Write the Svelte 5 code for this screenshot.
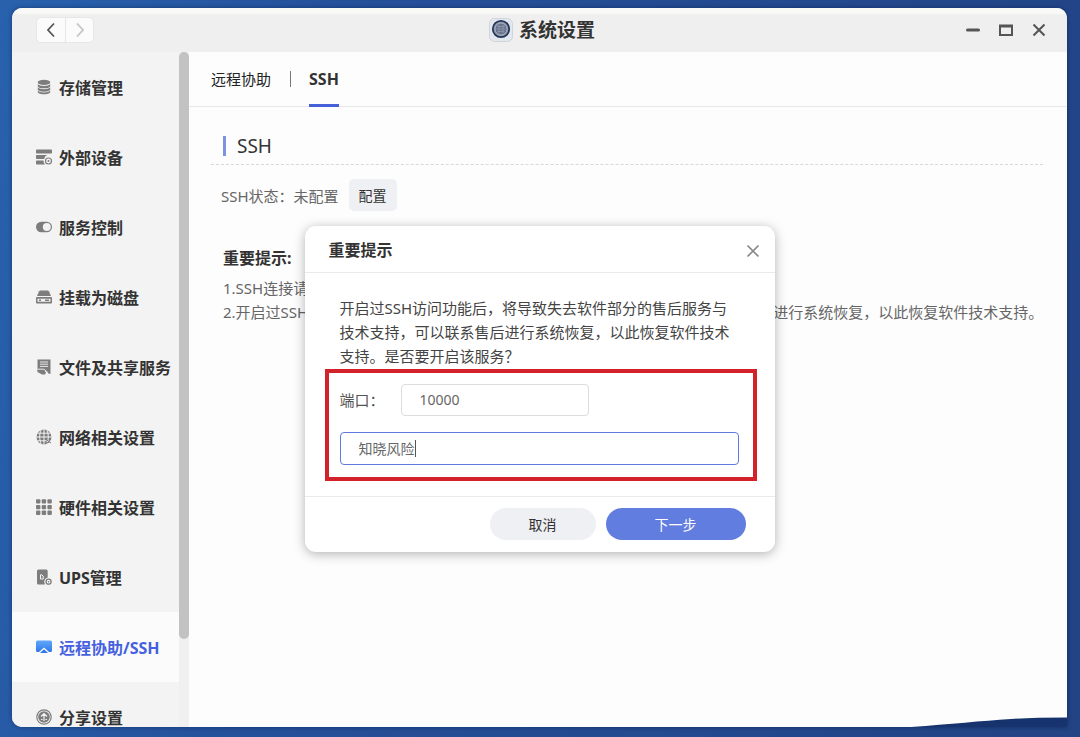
<script lang="ts">
  type MenuItem = { id: string; label: string };

  const menu: MenuItem[] = [
    { id: 'storage', label: '存储管理' },
    { id: 'external', label: '外部设备' },
    { id: 'service', label: '服务控制' },
    { id: 'mount', label: '挂载为磁盘' },
    { id: 'share-files', label: '文件及共享服务' },
    { id: 'network', label: '网络相关设置' },
    { id: 'hardware', label: '硬件相关设置' },
    { id: 'ups', label: 'UPS管理' },
    { id: 'remote', label: '远程协助/SSH' },
    { id: 'sharing', label: '分享设置' },
  ];

  let active = $state('remote');
  let dialogOpen = $state(true);
  let port = $state('10000');
  let confirmText = $state('知晓风险');
</script>

{#snippet menuIcon(id: string)}
  <svg class="menu-icon" viewBox="0 0 16 16" fill="currentColor" aria-hidden="true">
    {#if id === 'storage'}
      <ellipse cx="8" cy="3.4" rx="6.2" ry="2.6" />
      <path d="M1.800 5c1 2.500 11.400 2.500 12.400 0v2.400c-1 2.600-11.400 2.600-12.400 0zM1.800 8.300c1 2.500 11.400 2.500 12.400 0v2.400c-1 2.600-11.400 2.600-12.400 0zM1.800 11.600c1 2.500 11.400 2.500 12.400 0v1.600c-1 2.800-11.400 2.800-12.400 0z" />
    {:else if id === 'external'}
      <rect x="0" y="0.500" width="16" height="4" rx="0.800" />
      <path d="M.8 6h10.400a5 5 0 0 0-3 4H.8A.8.8 0 0 1 0 9.200V6.800A.8.8 0 0 1 .8 6zM.8 11.500H7.500a5 5 0 0 0 1.700 4H.8a.8.8 0 0 1-.8-.8v-2.400a.8.8 0 0 1 .8-.8z" />
      <circle cx="12.500" cy="12" r="3" fill="none" stroke="currentColor" stroke-width="1.200" />
      <circle cx="12.500" cy="12" r="1" />
    {:else if id === 'service'}
      <rect x="0" y="2.800" width="16" height="10.400" rx="5.200" />
      <circle cx="10.800" cy="8" r="4" fill="#f3f3f3" />
    {:else if id === 'mount'}
      <path d="M4.500 1.500h7c.6 0 1 .3 1.400.8L15 7H1l2.100-4.700C3.500 1.800 3.900 1.500 4.500 1.500z" />
      <path fill-rule="evenodd" d="M1 8h14a1 1 0 0 1 1 1v4.500a1 1 0 0 1-1 1H1a1 1 0 0 1-1-1V9a1 1 0 0 1 1-1zm.5 1.700v3h13v-3z" />
      <path d="M3 10.500h2v1.400H3zM9 10.500h4v1.400H9z" />
    {:else if id === 'share-files'}
      <path d="M1.500.5h13v14.500l-2-.5-3-2.500H1.500z" />
      <path d="M1.500 11h6l2.500 2.500-1 2H6L1.500 13z" />
      <path d="M4 3h8M4 5.200h8M4 7.400h8M1.500 10.200h6.500l4 3.500" stroke="#f3f3f3" stroke-width="0.900" fill="none" />
    {:else if id === 'network'}
      <circle cx="8" cy="8" r="7.500" />
      <path d="M8 0v16M0 8h16M1.500 4.200h13M1.500 11.800h13M5.200.8c-2 4-2 10 0 14.400M10.800.8c2 4 2 10 0 14.400" stroke="#f3f3f3" stroke-width="1" fill="none" />
      <path d="M10 10.500l5 3.500M15 10l-4.500 4.500" stroke="currentColor" stroke-width="1" />
    {:else if id === 'hardware'}
      {#each [0, 5.7, 11.4] as y}
        {#each [0, 5.7, 11.4] as x}
          <rect {x} y={y + 0.2} width="4.400" height="4.400" rx="1" />
        {/each}
      {/each}
    {:else if id === 'ups'}
      <path d="M2.500.5h7.700a1.500 1.500 0 0 1 1.500 1.500v6.500a4.500 4.500 0 0 0-2.700 7H2.500A1.500 1.500 0 0 1 1 14V2A1.500 1.500 0 0 1 2.500.5z" />
      <path d="M4.500 5.500v4.500h2.700V7L5 5.500" stroke="#f3f3f3" stroke-width="1" fill="none" />
      <circle cx="12.600" cy="12.700" r="2.500" fill="none" stroke="currentColor" stroke-width="1.300" />
      <circle cx="12.600" cy="12.700" r="0.800" />
    {:else if id === 'remote'}
      <defs>
        <linearGradient id="screen" x1="0" y1="0" x2="0" y2="1">
          <stop offset="0" stop-color="#63a8f8" />
          <stop offset="1" stop-color="#2f78ec" />
        </linearGradient>
      </defs>
      <path fill="url(#screen)" d="M1.500 1.500h13A1.500 1.500 0 0 1 16 3v8.500a1.500 1.500 0 0 1-1.500 1.500H13L8 8.500 3 13H1.500A1.500 1.500 0 0 1 0 11.500V3a1.500 1.500 0 0 1 1.500-1.500z" />
      <path fill="#2f78ec" d="M8 10.200l4 3.800H4z" />
    {:else}
      <circle cx="8" cy="8" r="7.200" fill="none" stroke="currentColor" stroke-width="1.200" />
      <circle cx="8" cy="8" r="5.800" />
      <path d="M8 12V4.800M5 7.500l3-3 3 3M5 10.500h1.500M9.500 10.500H11" stroke="#f3f3f3" stroke-width="1.200" fill="none" />
    {/if}
  </svg>
{/snippet}

<div class="desktop">
  <div class="window">
    <header class="titlebar">
      <div class="nav">
        <button class="nav-btn" aria-label="后退">
          <svg width="10" height="16" viewBox="0 0 10 16"><path d="M8 1.500L2 8l6 6.500" /></svg>
        </button>
        <button class="nav-btn" aria-label="前进" disabled>
          <svg width="10" height="16" viewBox="0 0 10 16"><path d="M2 1.500L8 8l-6 6.500" /></svg>
        </button>
      </div>
      <h1 class="title">
        <svg width="24" height="24" viewBox="0 0 24 24" aria-hidden="true">
          <rect x="0.500" y="0.500" width="23" height="23" rx="5" fill="#e3e8ee" stroke="#cfd5dc" />
          <circle cx="12" cy="11" r="8.200" fill="#8c95a4" stroke="#26365c" stroke-width="1.800" />
          <circle cx="12" cy="11" r="6" fill="#66718a" stroke="#b4bcc8" stroke-width="0.800" />
          <path d="M8 8.500h8M7.500 11h9M8.500 13.500h7M10 6.500v9M14 6.500v9" stroke="#929cae" stroke-width="0.800" />
        </svg>
        系统设置
      </h1>
      <div class="controls">
        <button class="control" aria-label="最小化">
          <svg width="14" height="14" viewBox="0 0 14 14"><path d="M1.500 7h11" stroke-linecap="round" class="thick" /></svg>
        </button>
        <button class="control" aria-label="最大化">
          <svg width="14" height="14" viewBox="0 0 14 14"><path d="M1 2.500h12v9.500H1zM1 3.500h12" /></svg>
        </button>
        <button class="control" aria-label="关闭">
          <svg width="14" height="14" viewBox="0 0 14 14"><path d="M1.500 1.500l11 11M12.500 1.500l-11 11" /></svg>
        </button>
      </div>
    </header>

    <div class="workspace">
      <nav class="sidebar">
        <div class="menu">
          {#each menu as item (item.id)}
            <button class="menu-item" class:active={active === item.id} onclick={() => (active = item.id)}>
              {@render menuIcon(item.id)}
              <span>{item.label}</span>
            </button>
          {/each}
        </div>
        <div class="scroll-track"><div class="scroll-thumb"></div></div>
      </nav>

      <main class="content">
        <div class="tabs">
          <a class="tab" href="#remote">远程协助</a>
          <span class="tab-divider"></span>
          <a class="tab tab-active" href="#ssh">SSH</a>
        </div>

        <section class="panel">
          <h2 class="section-title">SSH</h2>
          <div class="status">
            <span>SSH状态：未配置</span>
            <button class="config-btn" onclick={() => (dialogOpen = true)}>配置</button>
          </div>
          <div class="notes">
            <h3>重要提示:</h3>
            <p>1.SSH连接请使用客户端工具。</p>
            <p>2.开启过SSH访问功能后，将导致失去软件部分的售后服务与技术支持，可联系售后进行系统恢复，以此恢复软件技术支持。</p>
          </div>
        </section>
      </main>

      {#if dialogOpen}
        <div class="overlay">
          <div class="dialog" role="dialog" aria-labelledby="dialog-title">
            <div class="dialog-head">
              <h2 id="dialog-title">重要提示</h2>
              <button class="dialog-close" aria-label="关闭" onclick={() => (dialogOpen = false)}>
                <svg width="14" height="14" viewBox="0 0 14 14"><path d="M1.500 1.500l11 11M12.500 1.500l-11 11" /></svg>
              </button>
            </div>
            <div class="dialog-body">
              <p>开启过SSH访问功能后，将导致失去软件部分的售后服务与技术支持，可以联系售后进行系统恢复，以此恢复软件技术支持。是否要开启该服务？</p>
              <div class="highlight">
                <div class="port-row">
                  <label for="port">端口：</label>
                  <input id="port" class="field" type="text" bind:value={port} />
                </div>
                <div class="confirm">
                  <input class="field field-focus" type="text" aria-label="确认内容" bind:value={confirmText} />
                  <span class="caret"></span>
                </div>
              </div>
            </div>
            <div class="dialog-foot">
              <button class="btn btn-cancel" onclick={() => (dialogOpen = false)}>取消</button>
              <button class="btn btn-next">下一步</button>
            </div>
          </div>
        </div>
      {/if}
    </div>

    <svg class="wave" width="156" height="10" viewBox="0 0 156 10" aria-hidden="true">
      <path d="M0 10C40 7 70 4 100 2q20-1.500 56-1.500V10z" fill="#16336e" />
    </svg>
  </div>
</div>

<style>
  :global(body) {
    margin: 0;
  }

  .desktop {
    box-sizing: border-box;
    height: 100vh;
    padding: 8px 13px 10px 12px;
    background: linear-gradient(100deg, #2861ad 0%, #25509a 30%, #224384 100%);
    font-family: "Noto Sans", "Noto Sans CJK SC", sans-serif;
    font-size: 15px;
    color: #333;
  }

  .window {
    position: relative;
    display: flex;
    flex-direction: column;
    height: 100%;
    overflow: hidden;
    border-radius: 10px 10px 0 10px;
    background: #fdfdfd;
    box-shadow: 0 0 4px rgba(0, 20, 60, 0.5);
  }

  h1, h2, h3, p {
    margin: 0;
  }

  button {
    padding: 0;
    border: none;
    background: none;
    font: inherit;
    color: inherit;
    cursor: pointer;
  }

  /* ─── Title bar ─────────────────────────────────── */
  .titlebar {
    display: grid;
    grid-template-columns: 1fr auto 1fr;
    align-items: center;
    flex: none;
    height: 44px;
    padding: 0 21px 0 24px;
    background: linear-gradient(#fafaf7 0, #f8f8f6 5px, #efefef 7px);
  }
  .nav {
    display: flex;
    justify-self: start;
    border: 1px solid #e6e6e6;
    border-radius: 5px;
    background: #fbfbfb;
  }
  .nav-btn {
    display: grid;
    place-items: center;
    width: 28px;
    height: 24px;
  }
  .nav-btn + .nav-btn {
    border-left: 1px solid #e6e6e6;
  }
  .nav-btn path {
    fill: none;
    stroke: #555;
    stroke-width: 1.8;
  }
  .nav-btn:disabled path {
    stroke: #c4c4c4;
  }
  .title {
    display: flex;
    align-items: center;
    gap: 6px;
    padding-left: 2px;
    font-size: 19px;
    line-height: 24px;
    font-weight: 700;
  }
  .controls {
    display: flex;
    justify-self: end;
    gap: 19px;
  }
  .control {
    display: grid;
    place-items: center;
  }
  .control path {
    fill: none;
    stroke: #555;
    stroke-width: 2;
  }
  .control .thick {
    stroke-width: 3;
  }

  /* ─── Sidebar ───────────────────────────────────── */
  .workspace {
    position: relative;
    display: flex;
    flex: 1;
    min-height: 0;
  }
  .sidebar {
    display: flex;
    flex: none;
    width: 177px;
    background: #f3f3f3;
  }
  .menu {
    flex: 1;
    overflow: hidden;
  }
  .menu-item {
    display: flex;
    align-items: center;
    gap: 7px;
    width: 100%;
    height: 70px;
    padding-left: 24px;
    font-size: 16px;
    font-weight: 700;
    white-space: nowrap;
  }
  .menu-icon {
    flex: none;
    width: 16px;
    height: 16px;
    color: #7d7d7d;
  }
  .active {
    background: #fbfbfb;
    color: #4560e0;
  }
  .scroll-track {
    flex: none;
    width: 10px;
    background: #f0f0f0;
  }
  .scroll-thumb {
    height: 87%;
    border-radius: 5px;
    background: #c2c2c2;
  }

  /* ─── Content ───────────────────────────────────── */
  .content {
    flex: 1;
    min-width: 0;
  }
  .tabs {
    display: flex;
    align-items: stretch;
    height: 54px;
    padding-left: 22px;
    border-bottom: 1px solid #e8e8ea;
  }
  .tab {
    line-height: 55px;
    color: #222;
    text-decoration: none;
  }
  .tab-divider {
    align-self: center;
    width: 1px;
    height: 16px;
    margin: 0 18px 0 19px;
    background: #777;
  }
  .tab-active {
    box-sizing: border-box;
    height: 55px;
    border-bottom: 3px solid #4560d8;
    font-size: 16px;
    font-weight: 700;
    color: #333;
  }
  .panel {
    padding: 24px 24px 0 22px;
  }
  .section-title {
    display: flex;
    align-items: center;
    gap: 11px;
    height: 29px;
    padding: 0 12px 4px;
    border-bottom: 1px dashed #d8d8d8;
    font-size: 19px;
    line-height: 28px;
    font-weight: 400;
  }
  .section-title::before {
    content: "";
    width: 3px;
    height: 20px;
    background: #7f92e2;
  }
  .status {
    display: flex;
    align-items: center;
    gap: 10px;
    padding: 14px 10px 0;
    color: #666;
  }
  .config-btn {
    width: 48px;
    height: 32px;
    border-radius: 5px;
    background: #eff0f3;
    font-size: 14px;
    color: #333;
  }
  .notes {
    padding: 35px 0 0 12px;
    line-height: 24px;
    color: #666;
    white-space: nowrap;
  }
  .notes h3 {
    margin-bottom: 6px;
    font-size: 16px;
    font-weight: 700;
    color: #333;
  }

  /* ─── Dialog ────────────────────────────────────── */
  .overlay {
    position: absolute;
    inset: 0;
    display: grid;
    place-items: center;
    padding-bottom: 2px;
  }
  .dialog {
    width: 470px;
    border-radius: 11px;
    background: #fff;
    box-shadow: 0 2px 12px rgba(0, 0, 0, 0.3);
  }
  .dialog-head {
    display: flex;
    align-items: center;
    justify-content: space-between;
    height: 46px;
    padding: 0 15px 0 24px;
    border-bottom: 1px solid #ebebeb;
  }
  .dialog-head h2 {
    font-size: 16px;
    font-weight: 700;
  }
  .dialog-close {
    display: grid;
    place-items: center;
    padding-top: 4px;
  }
  .dialog-close path {
    stroke: #888;
    stroke-width: 1.7;
  }
  .dialog-body {
    padding: 23px 18px 15px 20px;
  }
  .dialog-body p {
    padding: 0 18px 1px 15px;
    line-height: 24px;
    color: #444;
  }
  .highlight {
    display: flex;
    flex-direction: column;
    gap: 16px;
    padding: 11px 14px 12px 11px;
    border: 4px solid #d3222a;
  }
  .port-row {
    display: flex;
    align-items: center;
    color: #555;
  }
  .port-row label {
    width: 61px;
  }
  .field {
    box-sizing: border-box;
    height: 32px;
    padding: 0 18px;
    border: 1px solid #dcdcdc;
    border-radius: 4px;
    outline: none;
    background: #fff;
    font: inherit;
    font-size: 14px;
    color: #666;
  }
  .port-row .field {
    width: 188px;
  }
  .confirm {
    position: relative;
    display: flex;
  }
  .field-focus {
    width: 100%;
    height: 33px;
    border-color: #6079dd;
    caret-color: transparent;
  }
  .caret {
    position: absolute;
    top: 8px;
    left: 75px;
    width: 1px;
    height: 17px;
    background: #555;
  }
  .dialog-foot {
    display: flex;
    justify-content: flex-end;
    gap: 10px;
    padding: 11px 29px 12px;
    border-top: 1px solid #ebebeb;
  }
  .btn {
    width: 106px;
    height: 32px;
    border-radius: 16px;
    font-size: 14px;
  }
  .btn-cancel {
    background: #eff0f4;
  }
  .btn-next {
    width: 140px;
    background: #627de0;
    color: #fff;
  }

  /* wallpaper ridge showing over the window corner */
  .wave {
    position: absolute;
    right: 0;
    bottom: 0;
  }
</style>
